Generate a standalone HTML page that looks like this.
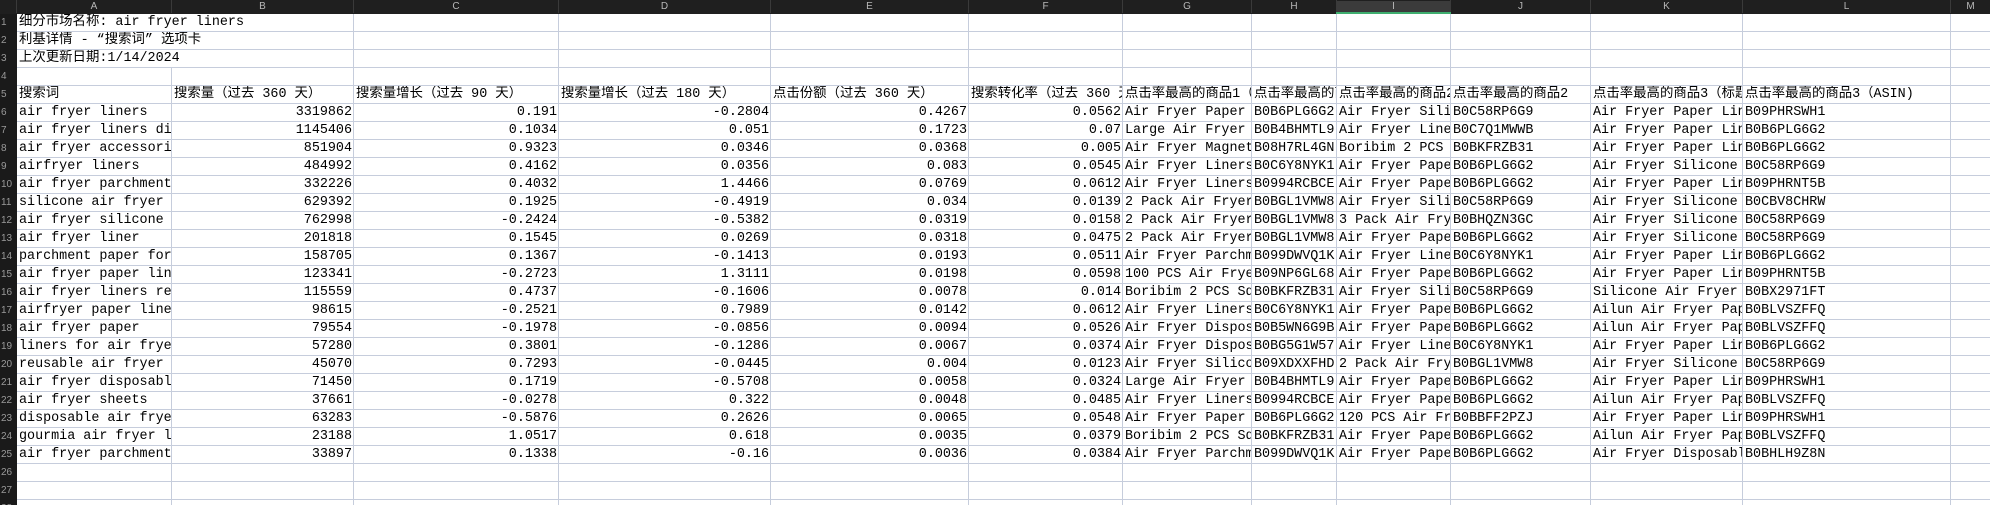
<!DOCTYPE html>
<html><head><meta charset="utf-8"><style>
html,body{margin:0;padding:0;background:#fff;width:1990px;height:505px;overflow:hidden}
table{border-collapse:collapse;table-layout:fixed;width:1990px;font-family:"Liberation Mono","Noto Sans CJK SC",monospace;font-size:13.4px;color:#000}
td{height:17px;border:1px solid #c6cddc;white-space:nowrap;overflow:hidden;padding:0 0 0 2px;line-height:17px}
td.n{text-align:right;padding:0 1px 0 0}
tr.h td{height:11px;background:#1f1f1f;color:#b8b8b8;font-family:"Liberation Sans",sans-serif;font-size:10px;text-align:center;border:1px solid #1f1f1f;border-right:1px solid #3a3a3a;line-height:11px;padding:0}
tr.h td.sel{background:#3b3b3b;border-bottom:2px solid #3fae6f}
td.r{background:#1a1a1a;border:1px solid #1a1a1a;color:#9a9a9a;font-size:10px;padding:0;text-align:left;font-family:"Liberation Sans",sans-serif}
</style></head><body>
<table>
<colgroup><col style="width:16px"><col style="width:155px"><col style="width:182px"><col style="width:205px"><col style="width:212px"><col style="width:198px"><col style="width:154px"><col style="width:129px"><col style="width:85px"><col style="width:114px"><col style="width:140px"><col style="width:152px"><col style="width:208px"><col style="width:40px"></colgroup>
<tr class="h"><td></td><td>A</td><td>B</td><td>C</td><td>D</td><td>E</td><td>F</td><td>G</td><td>H</td><td class="sel">I</td><td>J</td><td>K</td><td>L</td><td>M</td></tr>
<tr><td class="r">1</td><td colspan="2">细分市场名称: air fryer liners</td><td></td><td></td><td></td><td></td><td></td><td></td><td></td><td></td><td></td><td></td><td></td></tr>
<tr><td class="r">2</td><td colspan="2">利基详情 - “搜索词” 选项卡</td><td></td><td></td><td></td><td></td><td></td><td></td><td></td><td></td><td></td><td></td><td></td></tr>
<tr><td class="r">3</td><td colspan="2">上次更新日期:1/14/2024</td><td></td><td></td><td></td><td></td><td></td><td></td><td></td><td></td><td></td><td></td><td></td></tr>
<tr><td class="r">4</td><td></td><td></td><td></td><td></td><td></td><td></td><td></td><td></td><td></td><td></td><td></td><td></td><td></td></tr>
<tr><td class="r">5</td><td>搜索词</td><td>搜索量（过去 360 天）</td><td>搜索量增长（过去 90 天）</td><td>搜索量增长（过去 180 天）</td><td>点击份额（过去 360 天）</td><td>搜索转化率（过去 360 天）</td><td>点击率最高的商品1（标题）</td><td>点击率最高的商品1（ASIN）</td><td>点击率最高的商品2（标题）</td><td>点击率最高的商品2</td><td>点击率最高的商品3（标题）</td><td>点击率最高的商品3（ASIN)</td><td></td></tr>
<tr><td class="r">6</td><td>air fryer liners</td><td class="n">3319862</td><td class="n">0.191</td><td class="n">-0.2804</td><td class="n">0.4267</td><td class="n">0.0562</td><td>Air Fryer Paper Liners</td><td>B0B6PLG6G2</td><td>Air Fryer Silicone</td><td>B0C58RP6G9</td><td>Air Fryer Paper Liners</td><td>B09PHRSWH1</td><td></td></tr>
<tr><td class="r">7</td><td>air fryer liners disposable</td><td class="n">1145406</td><td class="n">0.1034</td><td class="n">0.051</td><td class="n">0.1723</td><td class="n">0.07</td><td>Large Air Fryer Liners</td><td>B0B4BHMTL9</td><td>Air Fryer Liners</td><td>B0C7Q1MWWB</td><td>Air Fryer Paper Liners</td><td>B0B6PLG6G2</td><td></td></tr>
<tr><td class="r">8</td><td>air fryer accessories</td><td class="n">851904</td><td class="n">0.9323</td><td class="n">0.0346</td><td class="n">0.0368</td><td class="n">0.005</td><td>Air Fryer Magnetic</td><td>B08H7RL4GN</td><td>Boribim 2 PCS</td><td>B0BKFRZB31</td><td>Air Fryer Paper Liners</td><td>B0B6PLG6G2</td><td></td></tr>
<tr><td class="r">9</td><td>airfryer liners</td><td class="n">484992</td><td class="n">0.4162</td><td class="n">0.0356</td><td class="n">0.083</td><td class="n">0.0545</td><td>Air Fryer Liners</td><td>B0C6Y8NYK1</td><td>Air Fryer Paper</td><td>B0B6PLG6G2</td><td>Air Fryer Silicone</td><td>B0C58RP6G9</td><td></td></tr>
<tr><td class="r">10</td><td>air fryer parchment</td><td class="n">332226</td><td class="n">0.4032</td><td class="n">1.4466</td><td class="n">0.0769</td><td class="n">0.0612</td><td>Air Fryer Liners</td><td>B0994RCBCE</td><td>Air Fryer Paper</td><td>B0B6PLG6G2</td><td>Air Fryer Paper Liners</td><td>B09PHRNT5B</td><td></td></tr>
<tr><td class="r">11</td><td>silicone air fryer</td><td class="n">629392</td><td class="n">0.1925</td><td class="n">-0.4919</td><td class="n">0.034</td><td class="n">0.0139</td><td>2 Pack Air Fryer</td><td>B0BGL1VMW8</td><td>Air Fryer Silicone</td><td>B0C58RP6G9</td><td>Air Fryer Silicone</td><td>B0CBV8CHRW</td><td></td></tr>
<tr><td class="r">12</td><td>air fryer silicone</td><td class="n">762998</td><td class="n">-0.2424</td><td class="n">-0.5382</td><td class="n">0.0319</td><td class="n">0.0158</td><td>2 Pack Air Fryer</td><td>B0BGL1VMW8</td><td>3 Pack Air Fryer</td><td>B0BHQZN3GC</td><td>Air Fryer Silicone</td><td>B0C58RP6G9</td><td></td></tr>
<tr><td class="r">13</td><td>air fryer liner</td><td class="n">201818</td><td class="n">0.1545</td><td class="n">0.0269</td><td class="n">0.0318</td><td class="n">0.0475</td><td>2 Pack Air Fryer</td><td>B0BGL1VMW8</td><td>Air Fryer Paper</td><td>B0B6PLG6G2</td><td>Air Fryer Silicone</td><td>B0C58RP6G9</td><td></td></tr>
<tr><td class="r">14</td><td>parchment paper for</td><td class="n">158705</td><td class="n">0.1367</td><td class="n">-0.1413</td><td class="n">0.0193</td><td class="n">0.0511</td><td>Air Fryer Parchment</td><td>B099DWVQ1K</td><td>Air Fryer Liners</td><td>B0C6Y8NYK1</td><td>Air Fryer Paper Liners</td><td>B0B6PLG6G2</td><td></td></tr>
<tr><td class="r">15</td><td>air fryer paper liners</td><td class="n">123341</td><td class="n">-0.2723</td><td class="n">1.3111</td><td class="n">0.0198</td><td class="n">0.0598</td><td>100 PCS Air Fryer</td><td>B09NP6GL68</td><td>Air Fryer Paper</td><td>B0B6PLG6G2</td><td>Air Fryer Paper Liners</td><td>B09PHRNT5B</td><td></td></tr>
<tr><td class="r">16</td><td>air fryer liners reusable</td><td class="n">115559</td><td class="n">0.4737</td><td class="n">-0.1606</td><td class="n">0.0078</td><td class="n">0.014</td><td>Boribim 2 PCS Square</td><td>B0BKFRZB31</td><td>Air Fryer Silicone</td><td>B0C58RP6G9</td><td>Silicone Air Fryer</td><td>B0BX2971FT</td><td></td></tr>
<tr><td class="r">17</td><td>airfryer paper liners</td><td class="n">98615</td><td class="n">-0.2521</td><td class="n">0.7989</td><td class="n">0.0142</td><td class="n">0.0612</td><td>Air Fryer Liners</td><td>B0C6Y8NYK1</td><td>Air Fryer Paper</td><td>B0B6PLG6G2</td><td>Ailun Air Fryer Paper</td><td>B0BLVSZFFQ</td><td></td></tr>
<tr><td class="r">18</td><td>air fryer paper</td><td class="n">79554</td><td class="n">-0.1978</td><td class="n">-0.0856</td><td class="n">0.0094</td><td class="n">0.0526</td><td>Air Fryer Disposable</td><td>B0B5WN6G9B</td><td>Air Fryer Paper</td><td>B0B6PLG6G2</td><td>Ailun Air Fryer Paper</td><td>B0BLVSZFFQ</td><td></td></tr>
<tr><td class="r">19</td><td>liners for air fryer</td><td class="n">57280</td><td class="n">0.3801</td><td class="n">-0.1286</td><td class="n">0.0067</td><td class="n">0.0374</td><td>Air Fryer Disposable</td><td>B0BG5G1W57</td><td>Air Fryer Liners</td><td>B0C6Y8NYK1</td><td>Air Fryer Paper Liners</td><td>B0B6PLG6G2</td><td></td></tr>
<tr><td class="r">20</td><td>reusable air fryer</td><td class="n">45070</td><td class="n">0.7293</td><td class="n">-0.0445</td><td class="n">0.004</td><td class="n">0.0123</td><td>Air Fryer Silicone</td><td>B09XDXXFHD</td><td>2 Pack Air Fryer</td><td>B0BGL1VMW8</td><td>Air Fryer Silicone</td><td>B0C58RP6G9</td><td></td></tr>
<tr><td class="r">21</td><td>air fryer disposable</td><td class="n">71450</td><td class="n">0.1719</td><td class="n">-0.5708</td><td class="n">0.0058</td><td class="n">0.0324</td><td>Large Air Fryer Liners</td><td>B0B4BHMTL9</td><td>Air Fryer Paper</td><td>B0B6PLG6G2</td><td>Air Fryer Paper Liners</td><td>B09PHRSWH1</td><td></td></tr>
<tr><td class="r">22</td><td>air fryer sheets</td><td class="n">37661</td><td class="n">-0.0278</td><td class="n">0.322</td><td class="n">0.0048</td><td class="n">0.0485</td><td>Air Fryer Liners</td><td>B0994RCBCE</td><td>Air Fryer Paper</td><td>B0B6PLG6G2</td><td>Ailun Air Fryer Paper</td><td>B0BLVSZFFQ</td><td></td></tr>
<tr><td class="r">23</td><td>disposable air fryer</td><td class="n">63283</td><td class="n">-0.5876</td><td class="n">0.2626</td><td class="n">0.0065</td><td class="n">0.0548</td><td>Air Fryer Paper Liners</td><td>B0B6PLG6G2</td><td>120 PCS Air Fryer</td><td>B0BBFF2PZJ</td><td>Air Fryer Paper Liners</td><td>B09PHRSWH1</td><td></td></tr>
<tr><td class="r">24</td><td>gourmia air fryer liners</td><td class="n">23188</td><td class="n">1.0517</td><td class="n">0.618</td><td class="n">0.0035</td><td class="n">0.0379</td><td>Boribim 2 PCS Square</td><td>B0BKFRZB31</td><td>Air Fryer Paper</td><td>B0B6PLG6G2</td><td>Ailun Air Fryer Paper</td><td>B0BLVSZFFQ</td><td></td></tr>
<tr><td class="r">25</td><td>air fryer parchment</td><td class="n">33897</td><td class="n">0.1338</td><td class="n">-0.16</td><td class="n">0.0036</td><td class="n">0.0384</td><td>Air Fryer Parchment</td><td>B099DWVQ1K</td><td>Air Fryer Paper</td><td>B0B6PLG6G2</td><td>Air Fryer Disposable</td><td>B0BHLH9Z8N</td><td></td></tr>
<tr><td class="r">26</td><td></td><td></td><td></td><td></td><td></td><td></td><td></td><td></td><td></td><td></td><td></td><td></td><td></td></tr>
<tr><td class="r">27</td><td></td><td></td><td></td><td></td><td></td><td></td><td></td><td></td><td></td><td></td><td></td><td></td><td></td></tr>
<tr><td class="r">28</td><td></td><td></td><td></td><td></td><td></td><td></td><td></td><td></td><td></td><td></td><td></td><td></td><td></td></tr>
</table>
</body></html>
